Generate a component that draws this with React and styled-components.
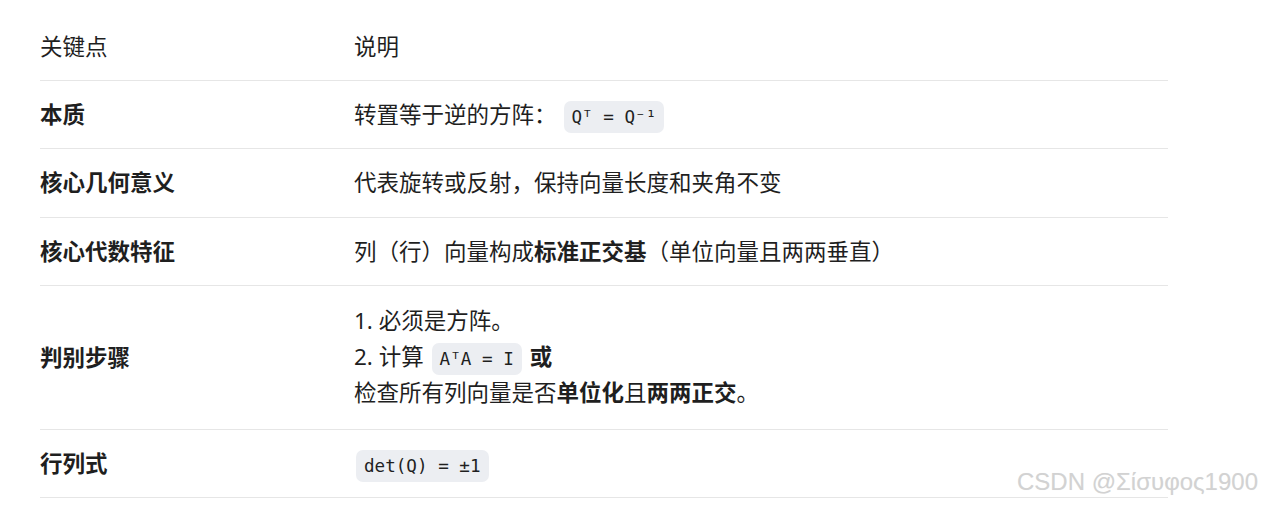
import React from 'react';
import styled, { createGlobalStyle } from 'styled-components';

const GlobalStyle = createGlobalStyle`
  html, body {
    margin: 0;
    padding: 0;
    background: #ffffff;
  }
  body {
    font-family: "Noto Sans", "Noto Sans CJK SC", sans-serif;
    color: #1f1f1f;
  }
`;

const Page = styled.div`
  position: relative;
  width: 1264px;
  height: 505px;
  padding: 13px 96px 0 40px;
  box-sizing: border-box;
  overflow: hidden;
`;

const Table = styled.table`
  width: 100%;
  border-collapse: collapse;
  font-size: 22.5px;
  line-height: 33px;
`;

const Row = styled.tr`
  border-bottom: 1px solid #e6e6e6;
`;

const Cell = styled.td`
  padding: 17px 0 17.25px;
  vertical-align: middle;
  font-weight: ${(p) => (p.$bold ? 700 : 400)};
  width: ${(p) => (p.$first ? '314px' : 'auto')};
  white-space: nowrap;
`;

const HeadCell = styled(Cell).attrs({ as: 'th' })`
  text-align: left;
  font-weight: 400;
  padding-bottom: 17px;
`;

const Line = styled.div`
  line-height: 36.2px;
`;

const Code = styled.code`
  font-family: "DejaVu Sans Mono", monospace;
  font-size: 17.6px;
  line-height: 20px;
  padding: 6px 8px;
  margin: 0 ${(p) => p.$gap || 2}px;
  background: #eceef2;
  border-radius: 7px;
  color: #1f1f1f;
`;

const Watermark = styled.div`
  position: absolute;
  right: 6px;
  bottom: 9px;
  font-family: "Liberation Sans", Arial, sans-serif;
  font-size: 24px;
  color: #d2d2d2;
  text-shadow: 0 0 1px rgba(0, 0, 0, 0.06);
`;

export default function App() {
  return (
    <Page>
      <GlobalStyle />
      <Table>
        <thead>
          <Row>
            <HeadCell $first>关键点</HeadCell>
            <HeadCell>说明</HeadCell>
          </Row>
        </thead>
        <tbody>
          <Row>
            <Cell $first $bold>本质</Cell>
            <Cell>
              转置等于逆的方阵：<Code $gap={7}>Qᵀ = Q⁻¹</Code>
            </Cell>
          </Row>
          <Row>
            <Cell $first $bold>核心几何意义</Cell>
            <Cell>代表旋转或反射，保持向量长度和夹角不变</Cell>
          </Row>
          <Row>
            <Cell $first $bold>核心代数特征</Cell>
            <Cell>
              列（行）向量构成<b>标准正交基</b>（单位向量且两两垂直）
            </Cell>
          </Row>
          <Row>
            <Cell $first $bold>判别步骤</Cell>
            <Cell>
              <Line>1. 必须是方阵。</Line>
              <Line>
                2. 计算 <Code>AᵀA = I</Code> <b>或</b>
              </Line>
              <Line>
                检查所有列向量是否<b>单位化</b>且<b>两两正交</b>。
              </Line>
            </Cell>
          </Row>
          <Row>
            <Cell $first $bold>行列式</Cell>
            <Cell>
              <Code $gap={0}>det(Q) = ±1</Code>
            </Cell>
          </Row>
        </tbody>
      </Table>
      <Watermark>CSDN @Σίσυφος1900</Watermark>
    </Page>
  );
}
